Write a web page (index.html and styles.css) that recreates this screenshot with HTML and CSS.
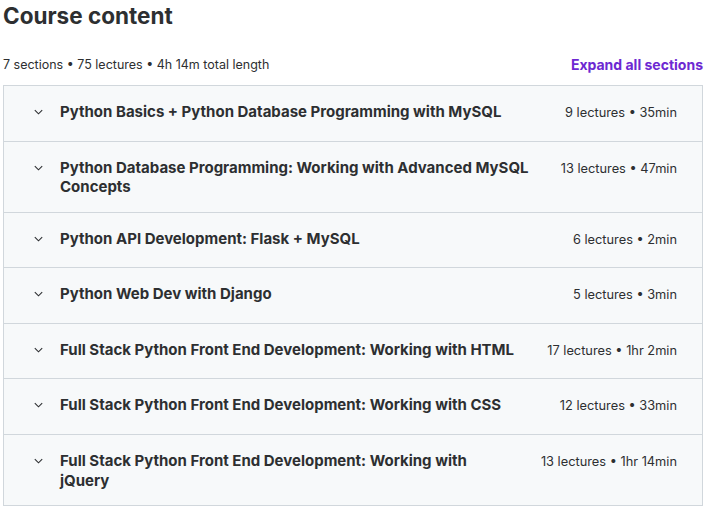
FILE: index.html
```html
<!DOCTYPE html>
<html lang="en">
<head>
    <meta charset="UTF-8">
    <meta name="viewport" content="width=device-width, initial-scale=1.0">
    <title>Course content</title>
    <link rel="stylesheet" href="styles.css">
</head>
<body>
    <div class="container">
        <h2 class="title">Course content</h2>
        <div class="summary">
            <span>7 sections • 75 lectures • 4h 14m total length</span>
            <button class="expand-all">Expand all sections</button>
        </div>
        <ul class="sections" id="sections"></ul>
    </div>

    <script>
        const sections = [
            { name: 'Python Basics + Python Database Programming with MySQL', meta: '9 lectures • 35min' },
            { name: 'Python Database Programming: Working with Advanced MySQL Concepts', meta: '13 lectures • 47min' },
            { name: 'Python API Development: Flask + MySQL', meta: '6 lectures • 2min' },
            { name: 'Python Web Dev with Django', meta: '5 lectures • 3min' },
            { name: 'Full Stack Python Front End Development: Working with HTML', meta: '17 lectures • 1hr 2min' },
            { name: 'Full Stack Python Front End Development: Working with CSS', meta: '12 lectures • 33min' },
            { name: 'Full Stack Python Front End Development: Working with jQuery', meta: '13 lectures • 1hr 14min' }
        ];

        const list = document.getElementById('sections');
        sections.forEach(section => {
            const li = document.createElement('li');
            li.className = 'section';
            li.innerHTML = `
                <span class="chevron">
                    <svg width="9" height="6" viewBox="0 0 9 6"><path d="M0.8 1.2l3.7 3.6 3.7-3.6" fill="none" stroke="#2d2f31" stroke-width="1.1"/></svg>
                </span>
                <span class="section-name">${section.name}</span>
                <span class="section-meta">${section.meta}</span>`;
            list.appendChild(li);
        });
    </script>
</body>
</html>
```

FILE: styles.css
```css
body {
    margin: 0;
    font-family: Inter, "Liberation Sans", sans-serif;
    color: #2d2f31;
    background: #fff;
}

.container {
    padding: 0 5px 0 3px;
}

.title {
    margin: 0;
    padding-top: 2px;
    font-size: 22.5px;
    line-height: 28px;
    font-weight: 700;
}

.summary {
    display: flex;
    justify-content: space-between;
    align-items: center;
    margin-top: 20px;
    height: 35px;
    padding-bottom: 6px;
    box-sizing: border-box;
    font-size: 12.5px;
}

.expand-all {
    padding: 0;
    border: none;
    background: none;
    font-family: inherit;
    font-size: 14px;
    font-weight: 700;
    color: #6d28d2;
    cursor: pointer;
}

.sections {
    list-style-type: none;
    margin: 0;
    padding: 0;
    border: 1px solid #d1d7dc;
    border-top: none;
}

.section {
    display: flex;
    align-items: flex-start;
    gap: 28px;
    padding: 16px 25px 14.6px 26px;
    border-top: 1px solid #d1d7dc;
    background: #f7f9fa;
}

.chevron {
    display: flex;
    justify-content: center;
    width: 16px;
    height: 24px;
    padding-top: 7px;
    box-sizing: border-box;
    flex-shrink: 0;
    margin-right: -14px;
}

.section-name {
    flex: 1;
    font-size: 15px;
    line-height: 19.7px;
    font-weight: 700;
}

.section-meta {
    padding-top: 1px;
    font-size: 12.8px;
    line-height: 19.7px;
    white-space: nowrap;
}
```
